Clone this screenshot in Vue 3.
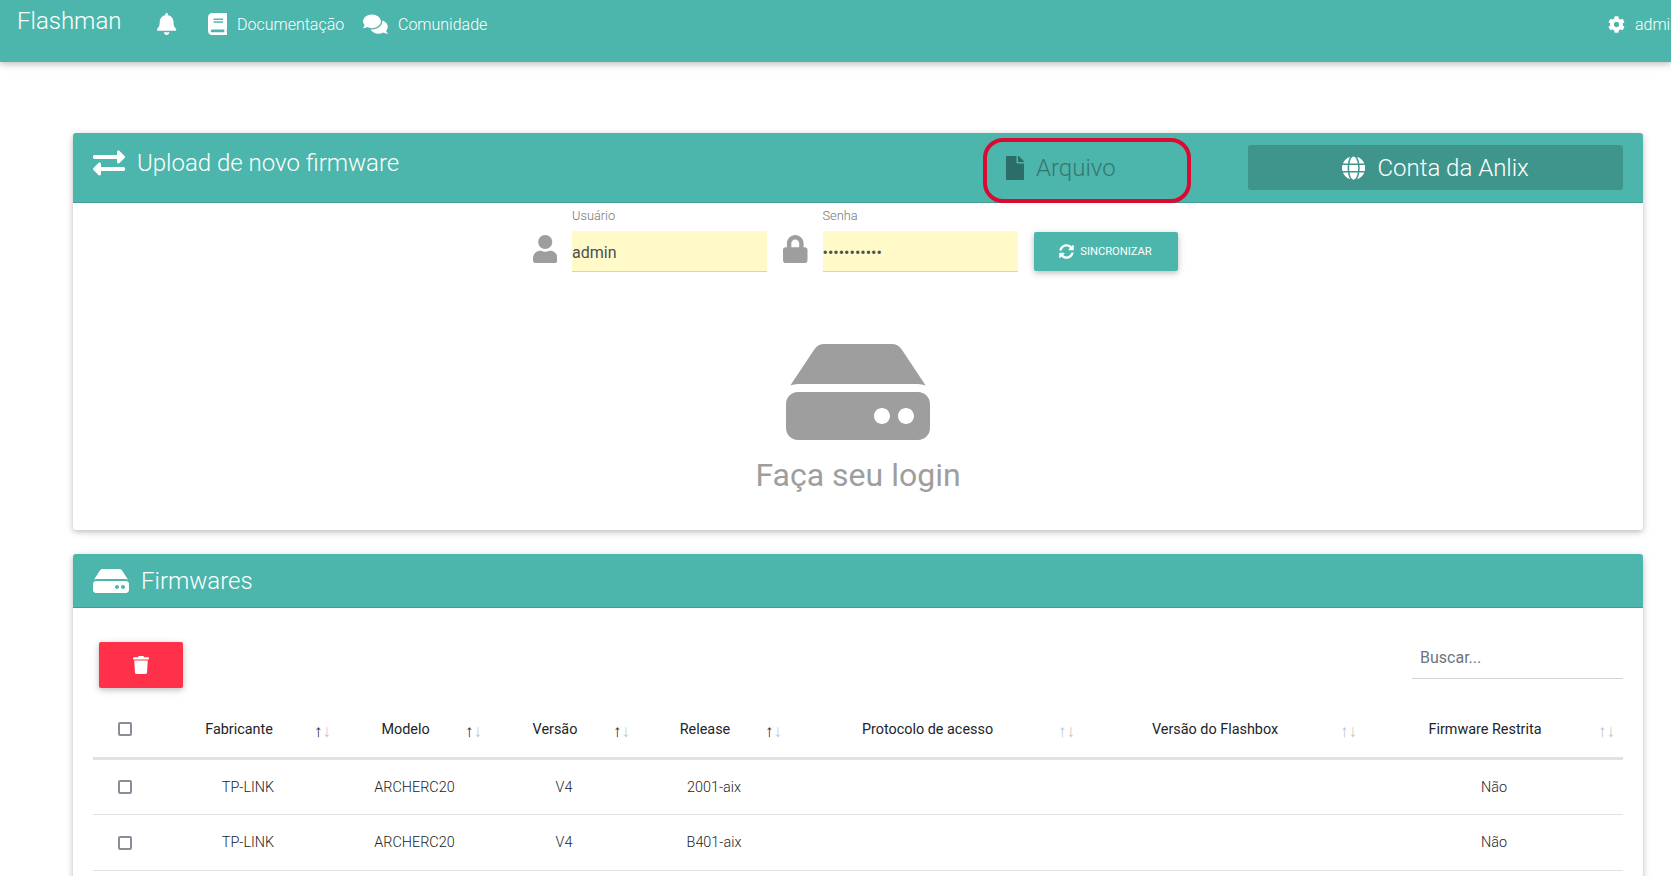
<template>
  <div class="page">
    <nav class="navbar">
      <span class="brand">Flashman</span>
      <svg class="nav-icon bell" viewBox="0 0 448 512"><path :d="icons.bell" /></svg>
      <a class="nav-link doc">
        <svg class="nav-icon" viewBox="0 0 448 512"><path :d="icons.book" /></svg>
        Documentação
      </a>
      <a class="nav-link community">
        <svg class="nav-icon" viewBox="0 0 576 512"><path :d="icons.comments" /></svg>
        Comunidade
      </a>
      <a class="nav-link user-link">
        <svg class="cog" viewBox="0 0 512 512"><path :d="icons.cog" /></svg>
        admin
      </a>
    </nav>

    <main class="content">
      <!-- Upload card -->
      <section class="card">
        <header class="card-header upload-header">
          <div class="title">
            <svg class="title-icon" viewBox="0 0 512 512"><path :d="icons.exchange" /></svg>
            <span>Upload de novo firmware</span>
          </div>
          <a class="tab-file">
            <svg class="tab-icon" viewBox="0 0 384 512"><path :d="icons.file" /></svg>
            Arquivo
          </a>
          <a class="tab-account">
            <svg class="tab-icon" viewBox="0 0 496 512"><path :d="icons.globe" /></svg>
            Conta da Anlix
          </a>
          <div class="highlight"></div>
        </header>

        <div class="upload-body">
          <form class="login-form" @submit.prevent>
            <svg class="field-icon" viewBox="0 0 448 512"><path :d="icons.user" /></svg>
            <label class="field">
              <span class="field-label">Usuário</span>
              <input class="field-input" type="text" value="admin" />
            </label>
            <svg class="field-icon" viewBox="0 0 448 512"><path :d="icons.lock" /></svg>
            <label class="field">
              <span class="field-label">Senha</span>
              <input class="field-input" type="password" value="12345678901" />
            </label>
            <button class="sync-btn" type="button">
              <svg class="sync-icon" viewBox="0 0 512 512"><path :d="icons.sync" /></svg>
              SINCRONIZAR
            </button>
          </form>

          <div class="login-hint">
            <svg class="hint-icon" viewBox="0 0 576 512"><path :d="icons.hdd" /></svg>
            <p class="hint-text">Faça seu login</p>
          </div>
        </div>
      </section>

      <!-- Firmware list -->
      <section class="card firmwares">
        <header class="card-header list-header">
          <svg class="list-icon" viewBox="0 0 576 512"><path :d="icons.hdd" /></svg>
          <span>Firmwares</span>
        </header>

        <div class="list-body">
          <div class="toolbar">
            <button class="delete-btn" type="button" aria-label="Excluir">
              <svg class="trash" viewBox="0 0 448 512"><path :d="icons.trash" /></svg>
            </button>
            <input class="search" type="text" placeholder="Buscar..." />
          </div>

          <table class="fw-table">
            <colgroup>
              <col style="width: 64px" />
              <col v-for="col in columns" :key="col.label" :style="{ width: col.width + 'px' }" />
            </colgroup>
            <thead>
              <tr>
                <th><input class="check" type="checkbox" /></th>
                <th v-for="col in columns" :key="col.label">
                  {{ col.label }}
                  <span class="sort">
                    <span :class="['arrow', { active: col.sorted }]">↑</span><span class="arrow">↓</span>
                  </span>
                </th>
              </tr>
            </thead>
            <tbody>
              <tr v-for="row in rows" :key="row.release">
                <td><input class="check" type="checkbox" /></td>
                <td>{{ row.vendor }}</td>
                <td>{{ row.model }}</td>
                <td>{{ row.version }}</td>
                <td>{{ row.release }}</td>
                <td></td>
                <td></td>
                <td>{{ row.restricted }}</td>
              </tr>
            </tbody>
          </table>
        </div>
      </section>
    </main>
  </div>
</template>

<script setup>
const icons = {
  bell: 'M224 512c35.32 0 63.97-28.65 63.97-64H160.03c0 35.35 28.65 64 63.97 64zm215.39-149.71c-19.32-20.76-55.47-51.99-55.47-154.29 0-77.7-54.48-139.9-127.94-155.16V32c0-17.67-14.32-32-31.98-32s-31.98 14.33-31.98 32v20.84C118.56 68.1 64.08 130.3 64.08 208c0 102.3-36.15 133.53-55.47 154.29-6 6.45-8.66 14.16-8.61 21.71.11 16.4 12.98 32 32.1 32h383.8c19.12 0 32-15.6 32.1-32 .05-7.55-2.61-15.27-8.61-21.71z',
  book: 'M448 360V24c0-13.3-10.7-24-24-24H96C43 0 0 43 0 96v320c0 53 43 96 96 96h328c13.3 0 24-10.7 24-24v-16c0-7.5-3.5-14.3-8.9-18.7-4.2-15.4-4.2-59.3 0-74.7 5.4-4.3 8.9-11.1 8.9-18.6zM128 134c0-3.3 2.7-6 6-6h212c3.3 0 6 2.7 6 6v20c0 3.3-2.7 6-6 6H134c-3.3 0-6-2.7-6-6v-20zm0 64c0-3.3 2.7-6 6-6h212c3.3 0 6 2.7 6 6v20c0 3.3-2.7 6-6 6H134c-3.3 0-6-2.7-6-6v-20zm253.4 250H96c-17.7 0-32-14.3-32-32 0-17.6 14.4-32 32-32h285.4c-1.9 17.1-1.9 46.9 0 64z',
  comments: 'M416 192c0-88.4-93.1-160-208-160S0 103.6 0 192c0 34.3 14.1 65.9 38 92-13.4 30.2-35.5 54.2-35.8 54.5-2.2 2.3-2.8 5.7-1.5 8.7S4.8 352 8 352c36.6 0 66.9-12.3 88.7-25 32.2 15.7 70.3 25 111.3 25 114.9 0 208-71.6 208-160zm122 220c23.9-26 38-57.7 38-92 0-66.9-53.5-124.2-129.3-148.1.9 6.6 1.3 13.3 1.3 20.1 0 105.9-107.7 192-240 192-10.8 0-21.3-.8-31.7-1.9C207.8 439.6 281.8 480 368 480c41 0 79.1-9.2 111.3-25 21.8 12.7 52.1 25 88.7 25 3.2 0 6.1-1.9 7.3-4.8 1.3-2.9.7-6.3-1.5-8.7-.3-.3-22.4-24.2-35.8-54.5z',
  cog: 'M487.4 315.7l-42.6-24.6c4.3-23.2 4.3-47 0-70.2l42.6-24.6c4.9-2.8 7.1-8.6 5.5-14-11.1-35.6-30-67.8-54.7-94.6-3.8-4.1-10-5.1-14.8-2.3L380.8 110c-17.9-15.4-38.5-27.3-60.8-35.1V25.8c0-5.6-3.9-10.5-9.4-11.7-36.7-8.2-74.3-7.8-109.2 0-5.5 1.2-9.4 6.1-9.4 11.7V75c-22.2 7.9-42.8 19.8-60.8 35.1L88.7 85.5c-4.9-2.8-11-1.9-14.8 2.3-24.7 26.7-43.6 58.9-54.7 94.6-1.7 5.4.6 11.2 5.5 14L67.3 221c-4.3 23.2-4.3 47 0 70.2l-42.6 24.6c-4.9 2.8-7.1 8.6-5.5 14 11.1 35.6 30 67.8 54.7 94.6 3.8 4.1 10 5.1 14.8 2.3l42.6-24.6c17.9 15.4 38.5 27.3 60.8 35.1v49.2c0 5.6 3.9 10.5 9.4 11.7 36.7 8.2 74.3 7.8 109.2 0 5.5-1.2 9.4-6.1 9.4-11.7v-49.2c22.2-7.9 42.8-19.8 60.8-35.1l42.6 24.6c4.9 2.8 11 1.9 14.8-2.3 24.7-26.7 43.6-58.9 54.7-94.6 1.5-5.5-.7-11.3-5.6-14.1zM256 336c-44.1 0-80-35.9-80-80s35.9-80 80-80 80 35.9 80 80-35.9 80-80 80z',
  exchange: 'M0 168v-16c0-13.255 10.745-24 24-24h360V80c0-21.367 25.899-32.042 40.971-16.971l80 80c9.372 9.373 9.372 24.569 0 33.941l-80 80C409.956 271.982 384 261.456 384 240v-48H24c-13.255 0-24-10.745-24-24zm488 152H128v-48c0-21.314-25.862-32.08-40.971-16.971l-80 80c-9.372 9.373-9.372 24.569 0 33.941l80 80C102.057 463.997 128 453.437 128 432v-48h360c13.255 0 24-10.745 24-24v-16c0-13.255-10.745-24-24-24z',
  file: 'M224 136V0H24C10.7 0 0 10.7 0 24v464c0 13.3 10.7 24 24 24h336c13.3 0 24-10.7 24-24V160H248c-13.2 0-24-10.8-24-24zm160-14.1v6.1H256V0h6.1c6.4 0 12.5 2.5 17 7l97.9 98c4.5 4.5 7 10.6 7 16.9z',
  globe: 'M336.5 160C322 70.7 287.8 8 248 8s-74 62.7-88.5 152h177zM152 256c0 22.2 1.2 43.5 3.3 64h185.3c2.1-20.5 3.3-41.8 3.3-64s-1.2-43.5-3.3-64H155.3c-2.1 20.5-3.3 41.8-3.3 64zm324.7-96c-28.6-67.9-86.5-120.4-158-141.6 24.4 33.8 41.2 84.7 50 141.6h108zM177.2 18.4C105.8 39.6 47.8 92.1 19.3 160h108c8.7-56.9 25.5-107.8 49.9-141.6zM487.4 192H372.7c2.1 21 3.3 42.5 3.3 64s-1.2 43-3.3 64h114.6c5.5-20.5 8.6-41.8 8.6-64s-3.1-43.5-8.5-64zM120 256c0-21.5 1.2-43 3.3-64H8.6C3.2 212.5 0 233.8 0 256s3.2 43.5 8.6 64h114.6c-2-21-3.2-42.5-3.2-64zm39.5 96c14.5 89.3 48.7 152 88.5 152s74-62.7 88.5-152h-177zm159.3 141.6c71.4-21.2 129.4-73.7 158-141.6h-108c-8.8 56.9-25.6 107.8-50 141.6zM19.3 352c28.6 67.9 86.5 120.4 158 141.6-24.4-33.8-41.2-84.7-50-141.6h-108z',
  user: 'M224 256c70.7 0 128-57.3 128-128S294.7 0 224 0 96 57.3 96 128s57.3 128 128 128zm89.6 32h-16.7c-22.2 10.2-46.9 16-72.9 16s-50.6-5.8-72.9-16h-16.7C60.2 288 0 348.2 0 422.4V464c0 26.5 21.5 48 48 48h352c26.5 0 48-21.5 48-48v-41.6c0-74.2-60.2-134.4-134.4-134.4z',
  lock: 'M400 224h-24v-72C376 68.2 307.8 0 224 0S72 68.2 72 152v72H48c-26.5 0-48 21.5-48 48v192c0 26.5 21.5 48 48 48h352c26.5 0 48-21.5 48-48V272c0-26.5-21.5-48-48-48zm-104 0H152v-72c0-39.7 32.3-72 72-72s72 32.3 72 72v72z',
  sync: 'M370.72 133.28C339.458 104.008 298.888 87.962 255.848 88c-77.458.068-144.328 53.178-162.791 126.85-1.344 5.363-6.122 9.15-11.651 9.15H24.103c-7.498 0-13.194-6.807-11.807-14.176C33.933 94.924 134.813 8 256 8c66.448 0 126.791 26.136 171.315 68.685L463.03 40.97C478.149 25.851 504 36.559 504 57.941V192c0 13.255-10.745 24-24 24H345.941c-21.382 0-32.09-25.851-16.971-40.971l41.75-41.749zM32 296h134.059c21.382 0 32.09 25.851 16.971 40.971l-41.75 41.75c31.262 29.273 71.835 45.319 114.876 45.28 77.418-.07 144.315-53.144 162.787-126.849 1.344-5.363 6.122-9.15 11.651-9.15h57.304c7.498 0 13.194 6.807 11.807 14.176C478.067 417.076 377.187 504 256 504c-66.448 0-126.791-26.136-171.315-68.685L48.97 471.03C33.851 486.149 8 475.441 8 454.059V320c0-13.255 10.745-24 24-24z',
  trash: 'M432 32H312l-9.4-18.7A24 24 0 0 0 281.1 0H166.8a23.72 23.72 0 0 0-21.4 13.3L136 32H16A16 16 0 0 0 0 48v32a16 16 0 0 0 16 16h416a16 16 0 0 0 16-16V48a16 16 0 0 0-16-16zM53.2 467a48 48 0 0 0 47.9 45h245.8a48 48 0 0 0 47.9-45L416 128H32z',
  hdd: 'M576 304v96c0 26.51-21.49 48-48 48H48c-26.51 0-48-21.49-48-48v-96c0-26.51 21.49-48 48-48h480c26.51 0 48 21.49 48 48zm-48-80a79.557 79.557 0 0 1 30.777 6.165L462.25 85.374A48.003 48.003 0 0 0 422.311 64H153.689a48 48 0 0 0-39.938 21.374L17.223 230.165A79.557 79.557 0 0 1 48 224h480zm-48 96c-17.673 0-32 14.327-32 32s14.327 32 32 32 32-14.327 32-32-14.327-32-32-32zm-96 0c-17.673 0-32 14.327-32 32s14.327 32 32 32 32-14.327 32-32-14.327-32-32-32z'
}

const columns = [
  { label: 'Fabricante', width: 182, sorted: true },
  { label: 'Modelo', width: 151, sorted: true },
  { label: 'Versão', width: 148, sorted: true },
  { label: 'Release', width: 152, sorted: true },
  { label: 'Protocolo de acesso', width: 293, sorted: false },
  { label: 'Versão do Flashbox', width: 282, sorted: false },
  { label: 'Firmware Restrita', width: 258, sorted: false }
]

const rows = [
  { vendor: 'TP-LINK', model: 'ARCHERC20', version: 'V4', release: '2001-aix', restricted: 'Não' },
  { vendor: 'TP-LINK', model: 'ARCHERC20', version: 'V4', release: 'B401-aix', restricted: 'Não' }
]
</script>

<style scoped>
.page {
  width: 1671px;
  height: 876px;
  overflow: hidden;
  background: #fff;
  font-family: Roboto, "Liberation Sans", sans-serif;
  color: #212529;
}

/* Navbar */
.navbar {
  display: flex;
  align-items: center;
  height: 62px;
  padding: 0 0 14px 17px;
  box-sizing: border-box;
  background: #4db6ac;
  color: #fff;
  box-shadow: 0 2px 5px rgba(0, 0, 0, 0.16), 0 2px 10px rgba(0, 0, 0, 0.12);
  overflow: hidden;
  position: relative;
}

.brand {
  font-size: 24px;
  font-weight: 300;
  margin-top: -6px;
}

.nav-icon {
  height: 22px;
  fill: #fff;
  flex-shrink: 0;
}

.bell {
  margin-left: 36px;
}

.nav-link {
  display: flex;
  align-items: center;
  font-size: 16px;
  font-weight: 300;
}

.doc {
  gap: 10px;
  margin-left: 31px;
}

.community {
  gap: 10px;
  margin-left: 19px;
}

.user-link {
  gap: 10px;
  margin-left: auto;
  margin-right: -8px;
}

.cog {
  width: 17px;
  height: 17px;
  fill: #fff;
}

/* Cards */
.content {
  padding: 71px 28px 0 73px;
}

.card {
  background: #fff;
  border-radius: 3px;
  box-shadow: 0 2px 5px rgba(0, 0, 0, 0.16), 0 2px 10px rgba(0, 0, 0, 0.12);
}

.firmwares {
  margin-top: 24px;
  padding-bottom: 40px;
}

.card-header {
  display: flex;
  align-items: center;
  box-sizing: border-box;
  padding: 0 20px;
  background: #4db6ac;
  border-bottom: 1px solid #429d94;
  border-radius: 3px 3px 0 0;
  color: #fff;
  font-size: 24px;
  font-weight: 300;
}

.upload-header {
  position: relative;
  height: 70px;
}

.title {
  display: flex;
  align-items: center;
  gap: 12px;
  margin-bottom: 10px;
  flex: 1;
}

.title-icon {
  width: 32px;
  height: 32px;
  fill: #fff;
}

.tab-file {
  display: flex;
  align-items: center;
  gap: 12px;
  width: 242px;
  color: #35776f;
}

.tab-icon {
  height: 24px;
  fill: currentColor;
}

.tab-file .tab-icon {
  fill: #2c6e67;
}

.tab-account {
  display: flex;
  align-items: center;
  justify-content: center;
  gap: 12px;
  width: 375px;
  height: 45px;
  background: #3f958c;
  border-radius: 3px;
}

.highlight {
  position: absolute;
  left: 910px;
  top: 5px;
  width: 208px;
  height: 65px;
  box-sizing: border-box;
  border: 4px solid #dc0a32;
  border-radius: 20px;
  pointer-events: none;
}

/* Login */
.upload-body {
  padding-top: 5px;
  height: 327px;
  box-sizing: border-box;
}

.login-form {
  display: flex;
  align-items: flex-end;
  justify-content: center;
  gap: 15px;
  padding-right: 6px;
}

.field-icon {
  height: 28px;
  fill: #9e9e9e;
  margin-bottom: 9px;
}

.field {
  display: flex;
  flex-direction: column;
  width: 195px;
  margin-right: 1px;
}

.field-label {
  font-size: 12.8px;
  font-weight: 300;
  line-height: 15px;
  color: #757575;
  margin-bottom: 8px;
}

.field-input {
  box-sizing: border-box;
  width: 100%;
  height: 41px;
  padding: 2px 0 0;
  border: none;
  border-bottom: 1px solid #ced4da;
  border-radius: 0;
  background: #fffac8;
  font-family: inherit;
  font-size: 16px;
  color: #495057;
  outline: none;
}

.sync-btn {
  display: flex;
  align-items: center;
  justify-content: center;
  gap: 6px;
  width: 144px;
  height: 39px;
  margin-bottom: 1px;
  border: none;
  border-radius: 2px;
  background: #4db6ac;
  color: #fff;
  font-family: inherit;
  font-size: 11.2px;
  font-weight: 400;
  box-shadow: 0 2px 5px rgba(0, 0, 0, 0.16), 0 2px 10px rgba(0, 0, 0, 0.12);
}

.sync-icon {
  width: 15px;
  height: 15px;
  fill: #fff;
}

.login-hint {
  display: flex;
  flex-direction: column;
  align-items: center;
  margin-top: 56px;
}

.hint-icon {
  width: 144px;
  height: 128px;
  fill: #9e9e9e;
}

.hint-text {
  margin: 1px 0 0;
  font-size: 32px;
  line-height: 36px;
  color: #9e9e9e;
}

/* Firmware table */
.list-header {
  height: 54px;
  gap: 12px;
}

.list-icon {
  width: 36px;
  height: 32px;
  fill: #fff;
}

.list-body {
  padding: 34px 20px 0;
}

.toolbar {
  display: flex;
  align-items: flex-start;
  justify-content: space-between;
  height: 58px;
}

.delete-btn {
  display: flex;
  align-items: center;
  justify-content: center;
  width: 84px;
  height: 46px;
  margin-left: 6px;
  border: none;
  border-radius: 2px;
  background: #ff304a;
  box-shadow: 0 2px 5px rgba(0, 0, 0, 0.16), 0 2px 10px rgba(0, 0, 0, 0.12);
}

.trash {
  width: 16px;
  height: 18px;
  fill: #fff;
}

.search {
  box-sizing: border-box;
  width: 211px;
  height: 39px;
  margin-top: -2px;
  padding: 0 8px 4px;
  border: none;
  border-bottom: 1px solid #ced4da;
  font-family: inherit;
  font-size: 16px;
  font-weight: 400;
  color: #495057;
  outline: none;
}

.search::placeholder {
  color: #6c757d;
}

.fw-table {
  width: 1530px;
  table-layout: fixed;
  border-collapse: collapse;
  text-align: center;
}

.fw-table th {
  position: relative;
  height: 58px;
  padding: 2px 18px 0 0;
  box-sizing: border-box;
  border-bottom: 3px solid #dee2e6;
  font-size: 14.4px;
  font-weight: 400;
  color: #212529;
}

.fw-table th:first-child {
  padding: 2px 0 0;
}

.fw-table td {
  height: 56px;
  padding: 1px 0 0;
  box-sizing: border-box;
  border-bottom: 1px solid #dee2e6;
  font-size: 14.4px;
  font-weight: 300;
  color: #212529;
}

.check {
  display: block;
  width: 14px;
  height: 14px;
  margin: 0 auto;
  box-sizing: border-box;
  appearance: none;
  border: 2px solid #8c8c98;
  border-radius: 2px;
  background: #fff;
}

.sort {
  position: absolute;
  right: 8px;
  top: 21px;
  font-size: 17px;
  line-height: 20px;
  font-weight: 400;
}

.arrow {
  color: #bfc3c7;
}

.arrow.active {
  color: #212529;
}
</style>

<style>
html,
body {
  margin: 0;
  overflow: hidden;
}
</style>
